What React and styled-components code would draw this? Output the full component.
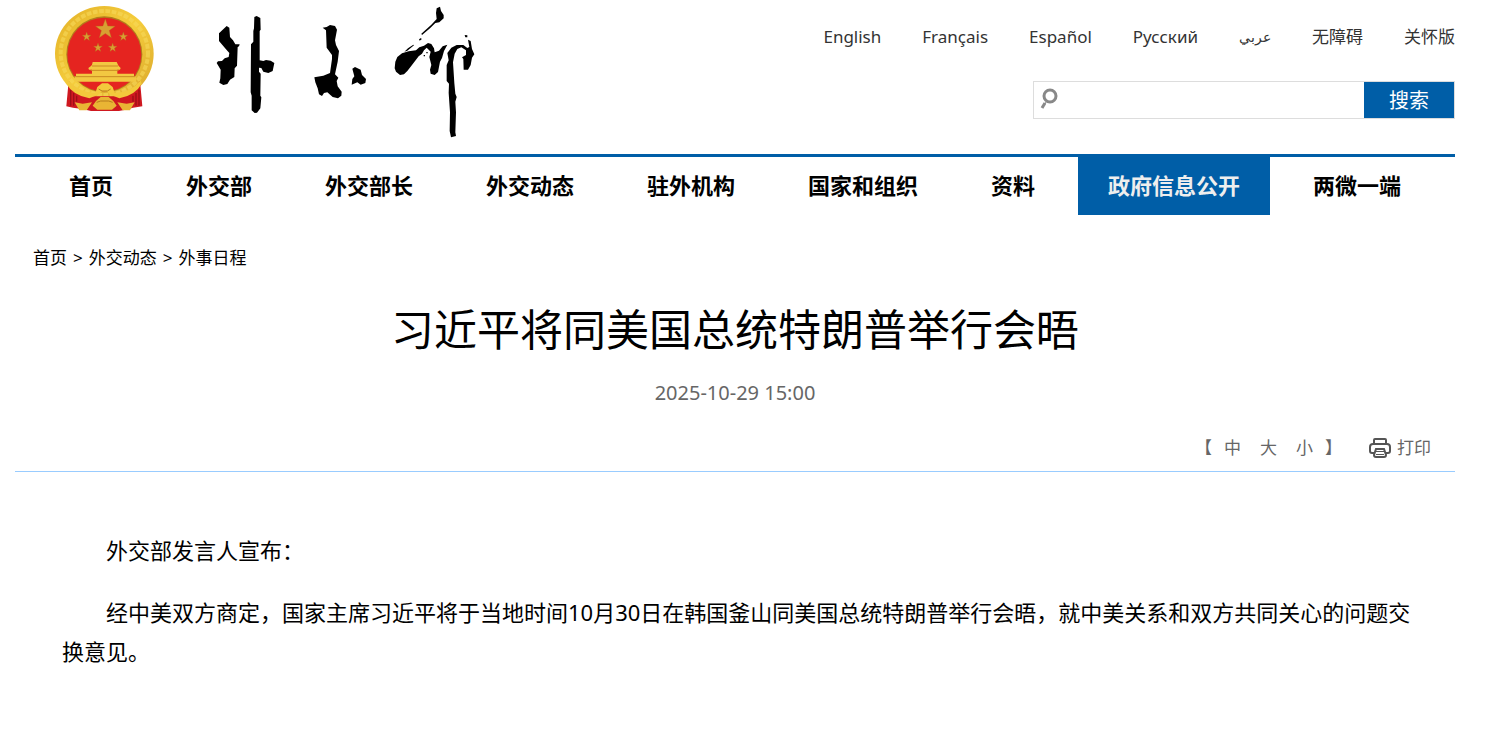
import React, { useState } from "react";
import styled, { createGlobalStyle } from "styled-components";

const languages = [
  { label: "English", lang: "en" },
  { label: "Français", lang: "fr" },
  { label: "Español", lang: "es" },
  { label: "Русский", lang: "ru" },
  { label: "عربي", lang: "ar" },
  { label: "无障碍", lang: "zh" },
  { label: "关怀版", lang: "zh" },
];

const menu = [
  { label: "首页" },
  { label: "外交部" },
  { label: "外交部长" },
  { label: "外交动态" },
  { label: "驻外机构" },
  { label: "国家和组织" },
  { label: "资料" },
  { label: "政府信息公开", active: true },
  { label: "两微一端" },
];

const sizes = [
  { label: "中", px: 22 },
  { label: "大", px: 26 },
  { label: "小", px: 18 },
];

function Star({ x, y, r }) {
  const points = [];
  for (let i = 0; i < 10; i++) {
    const radius = i % 2 ? r * 0.4 : r;
    const angle = (Math.PI / 5) * i - Math.PI / 2;
    points.push(
      `${x + radius * Math.cos(angle)},${y + radius * Math.sin(angle)}`
    );
  }
  return (
    <polygon
      points={points.join(" ")}
      fill="#d8a032"
      stroke="#b5651d"
      strokeWidth="1"
    />
  );
}

function Emblem() {
  return (
    <svg width="99" height="106" viewBox="45 15 297 318" aria-hidden="true">
      <defs>
        <linearGradient id="gold" x1="0" y1="0" x2="1" y2="1">
          <stop offset="0" stopColor="#e3b128" />
          <stop offset="0.5" stopColor="#f5cd3c" />
          <stop offset="1" stopColor="#d9a52b" />
        </linearGradient>
      </defs>
      <ellipse cx="193" cy="158" rx="148" ry="143" fill="url(#gold)" />
      <ellipse
        cx="193"
        cy="156"
        rx="131"
        ry="126"
        fill="none"
        stroke="#f7d95a"
        strokeWidth="12"
        strokeDasharray="14 5"
        opacity="0.6"
      />
      <circle cx="193" cy="160" r="114" fill="#b27d1c" />
      <circle cx="193" cy="161" r="111" fill="#e52420" />
      <Star x={196} y={85} r={31} />
      <Star x={140} y={107} r={14} />
      <Star x={250} y={107} r={14} />
      <Star x={174} y={140} r={14} />
      <Star x={218} y={140} r={14} />
      <path
        fill="#f2c842"
        d="M158 183h72l4 8 2 4 6 6-2 5h-8v12h50v8h6v16H104v-16h4v-8h48v-12h-9l-2-5 8-6 3-4z"
      />
      <path
        fill="none"
        stroke="#c98a22"
        strokeWidth="3"
        d="M156 195h78M152 208h84M106 227h180"
      />
      <path
        fill="#cf1820"
        d="M86 240l20 26 40 20h94l40-20 20-26 7 76-28 4-22 6-20 4h-84l-26-6-28-4-20-4z"
      />
      <path
        fill="none"
        stroke="#9d0f16"
        strokeWidth="4"
        d="M92 266v48M101 276v38M297 266v48M288 276v38M110 284v18M279 284v18"
      />
      <path
        fill="#f3c93c"
        d="M84 238q34 38 82 38l6-18 14-11h18l14 11 6 18q48 0 78-38l3 10q-18 34-67 44l-25-10-12-10h-16l-12 10-25 10q-50-10-69-44z"
      />
      <path
        fill="#e9b534"
        d="M168 300l14-12h24l14 12 10 14-14 12h-44l-14-12zM104 304l24 4 28-4-16 24h-22zM284 304l-24 4-28-4 16 24h22z"
      />
      <path
        fill="none"
        stroke="#b77c1d"
        strokeWidth="3"
        d="M176 264l10 6h16l10-6M170 304l12-4h24l12 4"
      />
    </svg>
  );
}

// Brush lettering of the ministry name
function Calligraphy() {
  return (
    <svg width="260" height="132" viewBox="48 21 780 396" fill="#000">
      <title>外交部</title>
      <path d="M80 81L88 86 90 114 99 124 106 136 119 136 117 142 113 144 111 200 104 208 103 234 90 242 82 255 70 258 58 251 61 238 62 212 50 192 54 187 66 186 74 178 86 174 88 162 78 151 57 126 57 103z" />
      <path d="M163 54L170 51 181 57 182 92 179 96 179 184 190 186 198 183 212 185 223 192 218 216 205 222 190 218 184 207 177 206 177 218 182 224 181 290 184 295 181 328 171 341 164 342 155 334 155 290 152 280 153 136 160 128 160 96 162 88z" />
      <path d="M368 86L380 84 390 78 405 81 411 92 405 124 408 138 417 156 413 188 405 226 415 236 410 246 413 262 425 278 424 290 414 298 398 294 382 280 372 282 366 291 357 286 353 268 346 250 343 235 370 230 390 222 396 180 396 168 380 146 378 94z" />
      <path d="M457 209L465 204 482 212 486 228 498 240 496 252 482 257 472 250 455 257 457 240 463 232z" />
      <path d="M710 28L720 23 723 36 731 48 731 58 718 70 706 72 690 88 666 108 664 104 694 77 710 60 708 42z" />
      <path d="M657 121L663 117 665 121 659 125zM613 158L624 148 640 137 642 139 622 155z" />
      <path d="M586 188L592 174 606 163 626 157 648 154 658 145 672 140 684 132 694 135 702 148 704 160 717 155 728 142 742 137 732 156 726 177 720 188 714 219 704 228 692 224 690 212 694 198 688 174 692 158 680 146 672 154 666 164 656 172 636 198 622 216 612 226 600 228 588 218 584 208z" />
      <path d="M742 162L754 146 770 138 790 138 802 147 808 144 804 122 812 126 816 150 823 166 816 176 812 198 804 212 791 212 790 180 786 175 798 168 798 154 784 145 772 150 764 164 759 190 763 252 766 284 770 294 766 308 768 340 766 400 768 411 753 415 749 396 750 340 746 282 747 254 740 246 740 198 746 184zM794 108L802 109 802 115 796 115z" />
      <path d="M679 159h4v4h-4zM671 168h4v4h-4z" />
    </svg>
  );
}

function SearchIcon() {
  return (
    <svg width="18" height="22" viewBox="0 0 18 22" fill="none" stroke="#888">
      <circle cx="10" cy="8" r="6" strokeWidth="3" />
      <path d="M6 14l-1 2" strokeWidth="1" />
      <path d="M5 15l-3 5" strokeWidth="3" />
    </svg>
  );
}

function PrintIcon() {
  return (
    <svg width="22" height="20" viewBox="0 0 22 20" fill="none" stroke="#555">
      <path
        strokeWidth="2"
        d="M5 5V2q0-1 1-1h10q1 0 1 1v3M5 15H3q-2 0-2-2V9q0-3 3-3h14q3 0 3 3v4q0 2-2 2h-2M7 11h8l2 6q0 2-2 2H7q-2 0-2-2z"
      />
      <path strokeWidth="1" d="M7 13.5h8M7 16.5h8" />
    </svg>
  );
}

function App() {
  const [keyword, setKeyword] = useState("");
  const [fontSize, setFontSize] = useState(22);

  return (
    <Page>
      <GlobalStyle />
      <Header>
        <Brand href="#">
          <Emblem />
          <Calligraphy />
        </Brand>
        <Tools>
          <Languages>
            {languages.map((item) => (
              <a href="#" lang={item.lang} key={item.label}>
                {item.label}
              </a>
            ))}
          </Languages>
          <SearchForm onSubmit={(e) => e.preventDefault()}>
            <SearchLabel htmlFor="keyword">
              <SearchIcon />
            </SearchLabel>
            <SearchInput
              id="keyword"
              type="text"
              aria-label="搜索"
              value={keyword}
              onChange={(e) => setKeyword(e.target.value)}
            />
            <SearchButton type="submit">搜索</SearchButton>
          </SearchForm>
        </Tools>
      </Header>

      <Nav>
        {menu.map((item) => (
          <NavLink href="#" $active={item.active} key={item.label}>
            {item.label}
          </NavLink>
        ))}
      </Nav>

      <Breadcrumb>
        <a href="#">首页</a>
        <span>&gt;</span>
        <a href="#">外交动态</a>
        <span>&gt;</span>
        <a href="#">外事日程</a>
      </Breadcrumb>

      <main>
        <Title>习近平将同美国总统特朗普举行会晤</Title>
        <PublishTime>2025-10-29 15:00</PublishTime>
        <ArticleTools>
          <SizeGroup>
            <span>【</span>
            {sizes.map((size) => (
              <ToolButton
                type="button"
                key={size.label}
                onClick={() => setFontSize(size.px)}
              >
                {size.label}
              </ToolButton>
            ))}
            <span>】</span>
          </SizeGroup>
          <ToolButton type="button" onClick={() => window.print()}>
            <PrintIcon />
            打印
          </ToolButton>
        </ArticleTools>
        <Article style={{ fontSize }}>
          <p>外交部发言人宣布：</p>
          <p>
            经中美双方商定，国家主席习近平将于当地时间10月30日在韩国釜山同美国总统特朗普举行会晤，就中美关系和双方共同关心的问题交换意见。
          </p>
        </Article>
      </main>
    </Page>
  );
}

export default App;

const GlobalStyle = createGlobalStyle`
  * {
    box-sizing: border-box;
  }

  body {
    margin: 0;
    background: #fff;
    color: #000;
    font-family: "Noto Sans", "Noto Sans CJK SC", sans-serif;
  }

  a {
    color: inherit;
    text-decoration: none;
  }

  button,
  input {
    font-family: inherit;
  }
`;

const Page = styled.div`
  padding: 0 36px 0 15px;
`;

const Header = styled.header`
  display: flex;
  justify-content: space-between;
  height: 154px;
`;

const Brand = styled.a`
  display: flex;
  align-items: flex-start;
  gap: 62px;
  padding: 6px 0 0 40px;
`;

const Tools = styled.div`
  display: flex;
  flex-direction: column;
  align-items: flex-end;
  padding-top: 24px;
`;

const Languages = styled.div`
  display: flex;
  gap: 41px;
  font-size: 17px;
  line-height: 26px;
  color: #333;

  a:lang(ar) {
    font-size: 14px;
  }
`;

const SearchForm = styled.form`
  display: flex;
  width: 422px;
  height: 38px;
  margin-top: 31px;
  border: 1px solid #ddd;
`;

const SearchLabel = styled.label`
  display: flex;
  padding: 6px 0 0 6px;
`;

const SearchInput = styled.input`
  flex: 1;
  min-width: 0;
  padding: 0 10px;
  border: 0;
  outline: 0;
  background: transparent;
  font-size: 17px;
`;

const SearchButton = styled.button`
  width: 90px;
  padding: 0 0 2px;
  border: 0;
  background: #005ea7;
  color: #fff;
  font-size: 20px;
  cursor: pointer;
`;

const Nav = styled.nav`
  display: flex;
  justify-content: center;
  gap: 13px;
  border-top: 3px solid #005ea7;
`;

const NavLink = styled.a`
  padding: 0 30px 2px;
  font-size: 22px;
  font-weight: bold;
  line-height: 56px;
  white-space: nowrap;
  color: ${(props) => (props.$active ? "#eee" : "#000")};
  background: ${(props) => (props.$active ? "#005ea7" : "transparent")};
`;

const Breadcrumb = styled.nav`
  display: flex;
  gap: 6px;
  padding: 30px 18px 0;
  font-size: 17px;
  line-height: 26px;
`;

const Title = styled.h1`
  margin: 27px 0 0;
  font-size: 43px;
  font-weight: normal;
  line-height: 64px;
  text-align: center;
`;

const PublishTime = styled.div`
  margin-top: 16px;
  font-size: 20px;
  line-height: 30px;
  text-align: center;
  color: #666;
`;

const ArticleTools = styled.div`
  display: flex;
  justify-content: flex-end;
  gap: 27px;
  margin-top: 27px;
  padding: 0 24px 10px;
  border-bottom: 1px solid #9cf;
  font-size: 17px;
  line-height: 26px;
  color: #666;
`;

const SizeGroup = styled.div`
  display: flex;
  gap: 19px;

  span:first-child {
    margin-right: -7px;
  }

  span:last-child {
    margin-left: -7px;
  }
`;

const ToolButton = styled.button`
  display: flex;
  align-items: center;
  gap: 6px;
  padding: 0;
  border: 0;
  background: transparent;
  color: inherit;
  font-size: inherit;
  line-height: inherit;
  cursor: pointer;
`;

const Article = styled.article`
  padding: 59px 44px 60px 47px;
  line-height: 39px;

  p {
    margin: 0 0 23px;
    text-indent: 2em;
  }
`;
